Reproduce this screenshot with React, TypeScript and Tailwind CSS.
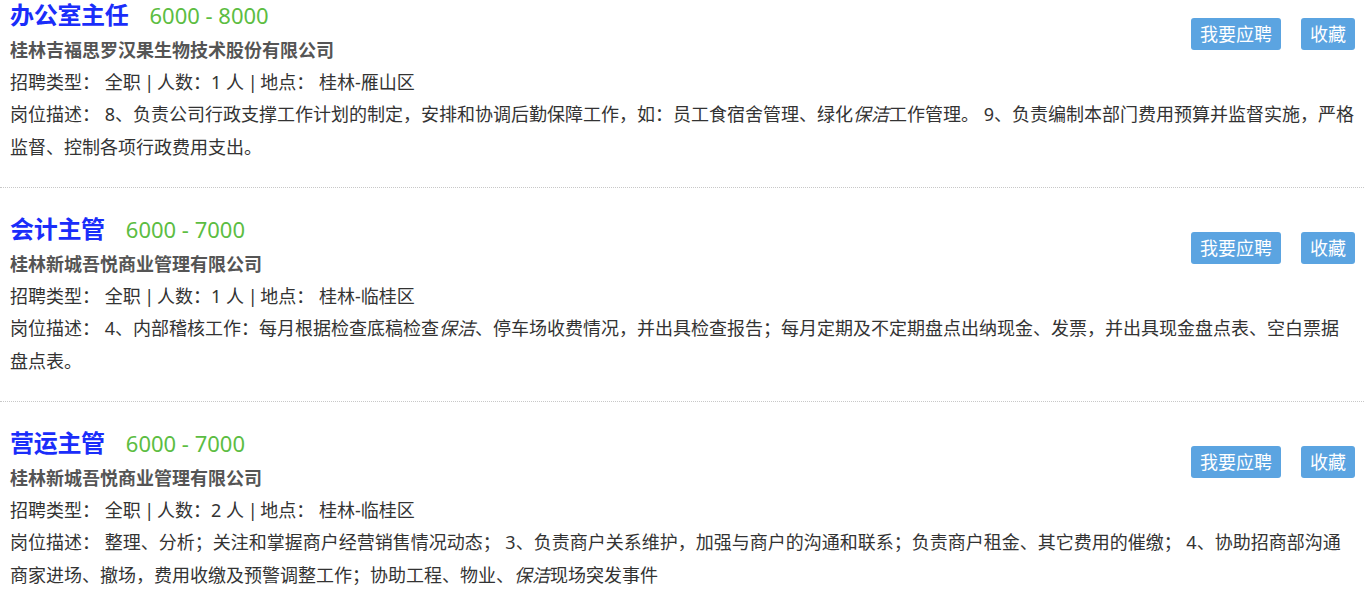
import React from 'react';

interface Job {
  title: string;
  salary: string;
  company: string;
  count: number;
  place: string;
  desc: React.ReactNode;
}

const jobs: Job[] = [
  {
    title: '办公室主任',
    salary: '6000 - 8000',
    company: '桂林吉福思罗汉果生物技术股份有限公司',
    count: 1,
    place: '桂林-雁山区',
    desc: (
      <>
        8、负责公司行政支撑工作计划的制定，安排和协调后勤保障工作，如：员工食宿舍管理、绿化<em>保洁</em>工作管理。 9、负责编制本部门费用预算并监督实施，严格监督、控制各项行政费用支出。
      </>
    ),
  },
  {
    title: '会计主管',
    salary: '6000 - 7000',
    company: '桂林新城吾悦商业管理有限公司',
    count: 1,
    place: '桂林-临桂区',
    desc: (
      <>
        4、内部稽核工作：每月根据检查底稿检查<em>保洁</em>、停车场收费情况，并出具检查报告；每月定期及不定期盘点出纳现金、发票，并出具现金盘点表、空白票据盘点表。
      </>
    ),
  },
  {
    title: '营运主管',
    salary: '6000 - 7000',
    company: '桂林新城吾悦商业管理有限公司',
    count: 2,
    place: '桂林-临桂区',
    desc: (
      <>
        整理、分析；关注和掌握商户经营销售情况动态； 3、负责商户关系维护，加强与商户的沟通和联系；负责商户租金、其它费用的催缴； 4、协助招商部沟通商家进场、撤场，费用收缴及预警调整工作；协助工程、物业、<em>保洁</em>现场突发事件
      </>
    ),
  },
];

const JobItem: React.FC<{ job: Job }> = ({ job }) => (
  <div className="pl-[10px] pr-[9px] pt-[22px] pb-[23px] border-b border-dotted border-[#c8c8c8]">
    <div className="flex justify-between">
      <div>
        <div className="h-[38px] flex items-center">
          <span className="text-[24px] font-bold text-[#1a2dfa] leading-[38px] tracking-[-0.3px]">{job.title}</span>
          <span className="ml-[21px] text-[22px] text-[#5cbd42] leading-[38px]">{job.salary}</span>
        </div>
        <div className="text-[18px] font-bold text-[#555] leading-[32px]">{job.company}</div>
        <div className="text-[18px] text-[#333] leading-[32px]">
          招聘类型： 全职<span className="tracking-[-1px]"> | </span>人数：{job.count} 人<span className="tracking-[-1px]"> | </span>地点： {job.place}
        </div>
      </div>
      <div className="flex gap-[20px] mt-[22px] h-[32px]">
        <button className="h-[32px] px-[9px] rounded-[3px] bg-[#5ba4e1] text-white text-[18px] leading-[32px]">
          我要应聘
        </button>
        <button className="h-[32px] px-[9px] rounded-[3px] bg-[#5ba4e1] text-white text-[18px] leading-[32px]">
          收藏
        </button>
      </div>
    </div>
    <div className="text-[18px] text-[#333] leading-[33px]">
      岗位描述： {job.desc}
    </div>
  </div>
);

export default function App() {
  return (
    <div
      className="h-[598px] overflow-hidden bg-white"
      style={{ fontFamily: '"Noto Sans", "Noto Sans CJK SC", sans-serif' }}
    >
      <div className="-mt-[26px]">
        {jobs.map((job) => (
          <JobItem key={job.title} job={job} />
        ))}
      </div>
    </div>
  );
}
